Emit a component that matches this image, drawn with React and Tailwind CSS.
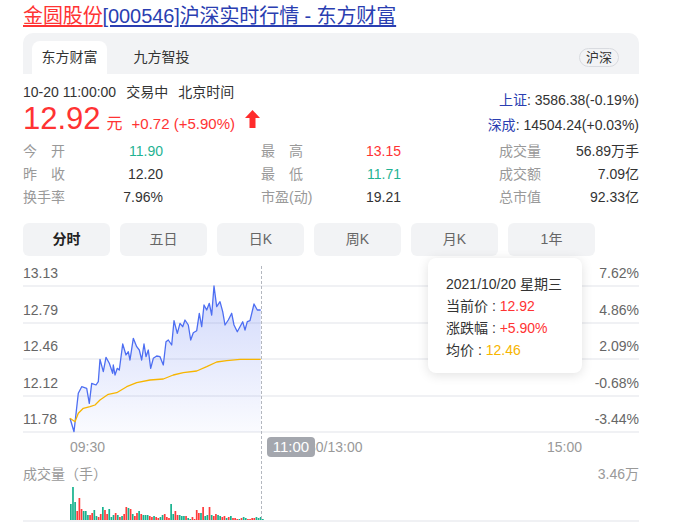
import React from "react";

// hand-traced minute line (zoom coords -> page coords)
const pricePts = [
  [30, 475], [42, 515], [55, 400], [65, 380], [80, 385], [88, 430], [95, 370], [108, 375], [115, 365],
  [120, 298], [130, 335], [138, 292], [148, 310], [158, 340], [160, 315], [165, 345], [172, 325],
  [178, 330], [188, 252], [198, 285], [205, 275], [210, 300], [220, 235], [230, 260], [238, 270],
  [245, 300], [252, 252], [258, 290], [265, 270], [272, 325], [280, 295], [290, 288], [300, 290],
  [310, 315], [318, 245], [325, 240], [335, 255], [342, 182], [352, 220], [360, 190], [368, 200],
  [375, 180], [385, 195], [392, 240], [400, 218], [410, 212], [418, 160], [425, 200], [432, 135],
  [440, 150], [448, 130], [455, 165], [462, 78], [470, 140], [480, 125], [488, 155], [495, 195],
  [505, 180], [515, 160], [522, 195], [532, 215], [540, 200], [548, 185], [555, 210], [562, 185],
  [570, 182], [582, 132], [592, 150], [602, 150],
].map(([a, b]) => [60 + a / 3, 260 + b / 3]);

const avgPts = [
  [30, 475], [45, 485], [55, 460], [70, 445], [90, 440], [105, 435], [120, 420], [145, 403],
  [170, 398], [200, 380], [230, 368], [270, 360], [310, 357], [340, 345], [370, 338], [410, 333],
  [440, 320], [470, 306], [500, 302], [540, 298], [602, 298],
].map(([a, b]) => [60 + a / 3, 260 + b / 3]);

const volHeights = [
  16, 33, 18, 9, 22, 11, 9, 9, 5, 5,
  7, 10, 4, 3, 6, 13, 10, 6, 11, 3,
  5, 7, 5, 3, 4, 6, 13, 12, 11, 6,
  4, 7, 9, 6, 5, 5, 5, 4, 3, 4,
  3, 2, 3, 5, 6, 3, 2, 16, 6, 9,
  5, 5, 4, 4, 4, 2, 1, 3, 1, 10,
  7, 7, 13, 4, 5, 13, 5, 4, 6, 5,
  4, 3, 4, 2, 3, 4, 2, 2, 1, 1,
  2, 3, 2, 1, 1, 2, 2, 3, 2, 3, 1,
];
const volColors = "gggrrrgggrrggrrgrrgggrgrgrrgrgrrgrgggrrgrrggrrrggrrgggrggrrrrgrggrgrrggrrgrgrrrgrggrrrrggg";

const toStr = (pts) => pts.map(([x, y]) => `${x.toFixed(1)},${y.toFixed(1)}`).join(" ");

const RED = "#ff3333";
const GREEN = "#1fb393";

function Label({ text }) {
  if (text.length === 2) {
    return (
      <span className="flex w-[42px] justify-between text-[#999]">
        <span>{text[0]}</span>
        <span>{text[1]}</span>
      </span>
    );
  }
  return <span className="text-[#999]">{text}</span>;
}

const stats = [
  [["今开", "11.90", GREEN], ["最高", "13.15", RED], ["成交量", "56.89万手", "#333"]],
  [["昨收", "12.20", "#333"], ["最低", "11.71", GREEN], ["成交额", "7.09亿", "#333"]],
  [["换手率", "7.96%", "#333"], ["市盈(动)", "19.21", "#333"], ["总市值", "92.33亿", "#333"]],
];

const periods = ["分时", "五日", "日K", "周K", "月K", "1年"];

const gridRows = [
  ["13.13", "7.62%", "h-[31px]"],
  ["12.79", "4.86%", "h-[36.5px]"],
  ["12.46", "2.09%", "h-[36.5px]"],
  ["12.12", "-0.68%", "h-[36.5px]"],
  ["11.78", "-3.44%", "h-[36.5px]"],
];

export default function App() {
  const pitch = 192 / 90;
  const fill = toStr([...pricePts, [pricePts[pricePts.length - 1][0], 432], [pricePts[0][0], 432]]);

  return (
    <div className="w-[676px] h-[531px] overflow-hidden bg-white pl-[23px] pr-[37px] font-['Liberation_Sans','Noto_Sans_CJK_SC',sans-serif] text-[14px] text-[#333]">
      {/* title */}
      <div className="pt-[2px] text-[20px] leading-[28px] whitespace-nowrap tracking-[-0.1px]">
        <a className="text-[#ff3333] underline underline-offset-2">金圆股份</a>
        <a className="text-[#2a3eb1] underline underline-offset-2">[000546]沪深实时行情 - 东方财富</a>
      </div>

      {/* source tabs */}
      <div className="mt-[3px] flex h-[41px] items-end justify-between rounded-t-[10px] bg-[#f2f3f5] pl-[9px] pr-[20px]">
        <div className="flex gap-[17px]">
          <div className="flex h-[33px] w-[75px] items-center justify-center rounded-t-[8px] bg-white text-[#333]">东方财富</div>
          <div className="flex h-[33px] w-[75px] items-center justify-center text-[#333]">九方智投</div>
        </div>
        <div className="mb-[7px] flex h-[19px] w-[40px] items-center justify-center rounded-full border border-[#d9dbe0] text-[13px] leading-none">
          沪深
        </div>
      </div>

      {/* quote header */}
      <div className="flex items-start justify-between">
        <div className="pt-[8px]">
          <div className="flex gap-[10px] leading-[20px]">
            <span>10-20 11:00:00</span>
            <span>交易中</span>
            <span>北京时间</span>
          </div>
          <div className="flex h-[34px] items-baseline text-[#ff3333]">
            <span className="text-[31px] leading-[34px]">12.92</span>
            <span className="ml-[6px] text-[16px]">元</span>
            <span className="ml-[9px] text-[15px]">+0.72 (+5.90%)</span>
            <svg className="ml-[10px] self-center" width="15" height="18" viewBox="0 0 15 18">
              <path d="M7.5 0 L15 8 L10.5 8 L10.5 18 L4.5 18 L4.5 8 L0 8 Z" fill="#ff2b2b" />
            </svg>
          </div>
        </div>
        <div className="pt-[14px] text-right leading-[25px]">
          <div>
            <span className="text-[#2a3eb1]">上证</span>: 3586.38(-0.19%)
          </div>
          <div>
            <span className="text-[#2a3eb1]">深成</span>: 14504.24(+0.03%)
          </div>
        </div>
      </div>

      {/* stats */}
      <div className="mt-[2px] flex flex-col">
        {stats.map((row, i) => (
          <div key={i} className="grid h-[23px] grid-cols-3 items-center gap-[98px] leading-[23px]">
            {row.map(([label, value, color]) => (
              <div key={label} className="flex justify-between">
                <Label text={label} />
                <span style={{ color }}>{value}</span>
              </div>
            ))}
          </div>
        ))}
      </div>

      {/* period buttons */}
      <div className="mt-[14px] flex gap-[10px]">
        {periods.map((p, i) => (
          <div
            key={p}
            className={`flex h-[33px] w-[87px] items-center justify-center rounded-[6px] bg-[#f2f3f5] ${
              i === 0 ? "font-bold text-[#222]" : "text-[#666]"
            }`}
          >
            {p}
          </div>
        ))}
      </div>

      {/* chart */}
      <div className="relative">
        {gridRows.map(([l, r, h]) => (
          <div key={l} className={`flex items-end justify-between border-b-2 border-[#f0f1f4] pb-[3px] leading-[18px] text-[#666] ${h}`}>
            <span>{l}</span>
            <span>{r}</span>
          </div>
        ))}

        <div className="relative flex h-[31px] items-start justify-between pl-[47px] pr-[57px] pt-[4px] leading-[20px] text-[#999]">
          <span>09:30</span>
          <span>11:30/13:00</span>
          <span>15:00</span>
          <div className="absolute left-[244px] top-[4px] flex h-[20px] w-[48px] items-center justify-center rounded-[4px] bg-[#a4a7ae] text-[15px] text-white">
            11:00
          </div>
        </div>

        <div className="flex justify-between leading-[20px] text-[#999]">
          <span>成交量（手）</span>
          <span>3.46万</span>
        </div>
        <div className="h-[38px] border-b-2 border-[#f0f1f4]" />

        <svg className="pointer-events-none absolute left-0 top-0" width="616" height="266" viewBox="23 256 616 266">
          <defs>
            <linearGradient id="area" x1="0" y1="0" x2="0" y2="1">
              <stop offset="0" stopColor="#5b76f0" stopOpacity="0.28" />
              <stop offset="1" stopColor="#5b76f0" stopOpacity="0.03" />
            </linearGradient>
          </defs>
          <polygon points={fill} fill="url(#area)" />
          <polyline points={toStr(pricePts)} fill="none" stroke="#4d6ef2" strokeWidth="1.3" strokeLinejoin="round" />
          <polyline points={toStr(avgPts)} fill="none" stroke="#f7b500" strokeWidth="1.3" strokeLinejoin="round" />
          {volHeights.map((h, i) => (
            <rect
              key={i}
              x={70 + i * pitch}
              y={520 - h}
              width="1.7"
              height={h}
              fill={volColors[i] === "r" ? "#ff3b3b" : "#17b28e"}
            />
          ))}
          <line x1="261.5" y1="266" x2="261.5" y2="521" stroke="#b3b7bf" strokeWidth="1" strokeDasharray="3 2" />
        </svg>

        {/* hover tooltip */}
        <div className="absolute left-[405px] top-[2px] h-[115px] w-[154px] rounded-[8px] bg-white px-[18px] pt-[15px] leading-[22px] shadow-[0_2px_12px_rgba(0,0,0,0.12)]">
          <div>2021/10/20 星期三</div>
          <div>
            当前价 : <span className="text-[#ff3333]">12.92</span>
          </div>
          <div>
            涨跌幅 : <span className="text-[#ff3333]">+5.90%</span>
          </div>
          <div>
            均价 : <span className="text-[#f7b500]">12.46</span>
          </div>
        </div>
      </div>
    </div>
  );
}
